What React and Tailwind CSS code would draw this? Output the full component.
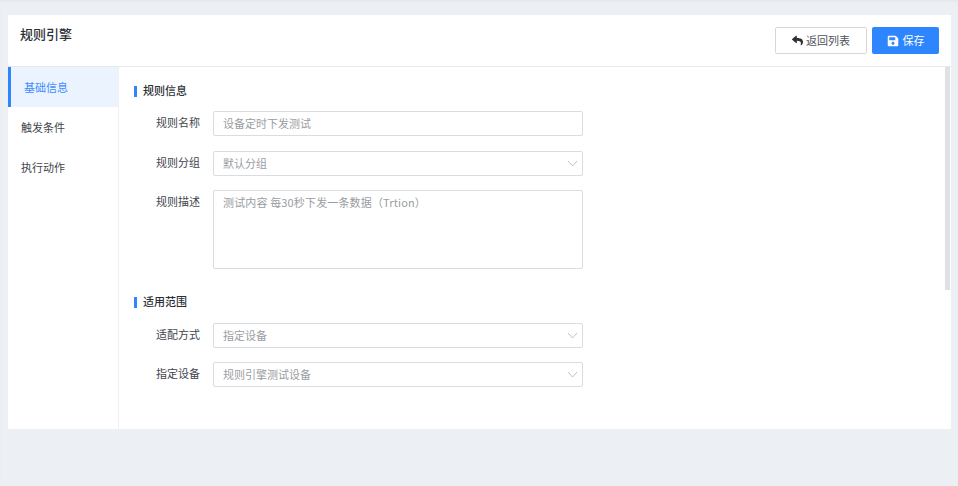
import React from "react";
import { FaReply, FaSave } from "react-icons/fa";

const font = { fontFamily: '"Noto Sans CJK SC", "Noto Sans", sans-serif' };

function Chevron() {
  return (
    <svg width="11" height="7" viewBox="0 0 11 7" fill="none" className="shrink-0">
      <path d="M1 1l4.5 5L10 1" stroke="#bfc2c7" strokeWidth="1" />
    </svg>
  );
}

function Row({ label, mb = "mb-[15px]", children }) {
  return (
    <div className={`flex items-start ${mb}`}>
      <div className="w-[66px] text-right text-[11px] leading-[25px] text-[#41454c] -mt-[1px] shrink-0">{label}</div>
      <div className="ml-[13px] w-[370px]">{children}</div>
    </div>
  );
}

function Field({ text, select }) {
  return (
    <div className="h-[25px] border border-[#d9dce0] rounded-[2px] bg-white flex items-center justify-between pl-[9px] pr-[4px]">
      <span className="text-[11px] text-[#9a9da2]">{text}</span>
      {select && <Chevron />}
    </div>
  );
}

function Section({ title, className = "" }) {
  return (
    <div className={`flex items-center ${className}`}>
      <span className="w-[3px] h-[11px] bg-[#2e86ff] mt-[2px]" />
      <span className="ml-[6px] text-[11px] font-medium text-[#2c3036] leading-[14px]">{title}</span>
    </div>
  );
}

export default function App() {
  return (
    <div style={font} className="h-[486px] bg-[#eceff4] pl-2 pr-[7px] pt-[15px] overflow-hidden shadow-[inset_0_2px_2px_rgba(0,0,0,0.03)]">
      <div className="bg-white h-[414px] flex flex-col">
        <header className="h-[52px] shrink-0 border-b border-[#e6e8ec] flex justify-between pl-3 pr-3">
          <h1 className="text-[13px] font-medium text-[#2c3036] leading-[18px] mt-[10px]">规则引擎</h1>
          <div className="flex gap-[5px] mt-3">
            <button className="w-[92px] h-[27px] border border-[#d5d7db] rounded-[2px] bg-white flex items-center justify-center gap-[3px] text-[11px] text-[#4f5359]">
              <FaReply className="text-[11px] text-[#2c3036]" />
              返回列表
            </button>
            <button className="w-[67px] h-[27px] rounded-[2px] bg-[#2e86ff] flex items-center justify-center gap-[4px] text-[11px] text-white">
              <FaSave className="text-[12px]" />
              保存
            </button>
          </div>
        </header>
        <div className="flex flex-1 min-h-0">
          <nav className="w-[111px] shrink-0 border-r border-[#eef0f3] text-[11px] text-[#41454c]">
            <div className="h-10 flex items-center bg-[#ebf3ff] border-l-[3px] border-[#2e86ff] pl-[13px] text-[#3d8bff]">基础信息</div>
            <div className="h-10 flex items-center pl-[13px]">触发条件</div>
            <div className="h-10 flex items-center pl-[13px]">执行动作</div>
          </nav>
          <main className="flex-1 pl-[15px] pt-4">
            <Section title="规则信息" className="mb-[14px]" />
            <Row label="规则名称"><Field text="设备定时下发测试" /></Row>
            <Row label="规则分组" mb="mb-[14px]"><Field text="默认分组" select /></Row>
            <Row label="规则描述" mb="mb-[25px]">
              <div className="h-[79px] border border-[#d9dce0] rounded-[2px] pl-[9px] pr-[10px] pt-[2px] text-[11px] leading-[18px] text-[#9a9da2] tracking-[0.15px]">
                测试内容 每30秒下发一条数据（Trtion）
              </div>
            </Row>
            <Section title="适用范围" className="mb-[15px]" />
            <Row label="适配方式" mb="mb-[14px]"><Field text="指定设备" select /></Row>
            <Row label="指定设备"><Field text="规则引擎测试设备" select /></Row>
          </main>
          <div className="w-[5px] shrink-0 mr-[1px]">
            <div className="h-[223px] bg-[#dfe1e5]" />
          </div>
        </div>
      </div>
    </div>
  );
}
